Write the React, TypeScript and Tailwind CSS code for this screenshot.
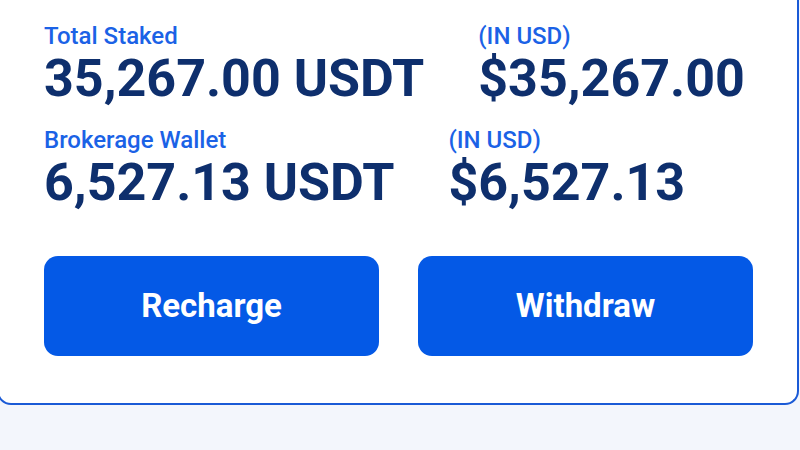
export default function App() {
  return (
    <div className="h-[450px] w-[800px] overflow-hidden bg-[#f3f6fc] font-['Roboto',sans-serif]">
      {/* Карточка баланса */}
      <div className="ml-[-3px] w-[802px] rounded-b-[14px] border-2 border-t-0 border-[#1a5ad6] bg-white pl-[45px] pr-[44px] pt-[22px] pb-[47px]">
        <div className="flex gap-[54px] whitespace-nowrap">
          <div>
            <div className="text-[24px] leading-[28px] font-medium text-[#1b62e6]">Total Staked</div>
            <div className="text-[52px] leading-[58px] font-bold text-[#0e2f6d]">35,267.00 USDT</div>
          </div>
          <div>
            <div className="text-[24px] leading-[28px] font-medium text-[#1b62e6]">(IN USD)</div>
            <div className="text-[52px] leading-[58px] font-bold text-[#0e2f6d]">$35,267.00</div>
          </div>
        </div>

        <div className="mt-[18px] flex gap-[54px] whitespace-nowrap">
          <div>
            <div className="text-[24px] leading-[28px] font-medium text-[#1b62e6]">Brokerage Wallet</div>
            <div className="text-[52px] leading-[58px] font-bold text-[#0e2f6d]">6,527.13 USDT</div>
          </div>
          <div>
            <div className="text-[24px] leading-[28px] font-medium text-[#1b62e6]">(IN USD)</div>
            <div className="text-[52px] leading-[58px] font-bold text-[#0e2f6d]">$6,527.13</div>
          </div>
        </div>

        {/* Кнопки */}
        <div className="mt-[44px] grid grid-cols-2 gap-[39px]">
          <button className="h-[100px] rounded-[14px] bg-[#0459e6] text-[33px] font-bold text-white">Recharge</button>
          <button className="h-[100px] rounded-[14px] bg-[#0459e6] text-[33px] font-bold text-white">Withdraw</button>
        </div>
      </div>
    </div>
  );
}
